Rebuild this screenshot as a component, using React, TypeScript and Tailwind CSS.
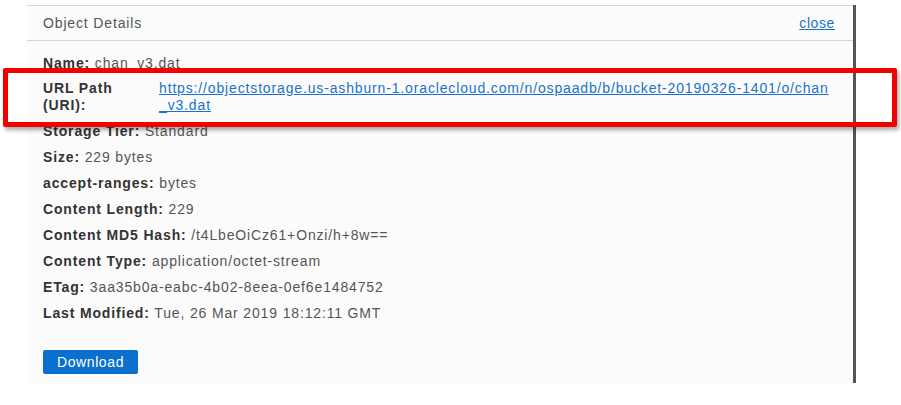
const rows: [string, string][] = [
  ['Storage Tier:', 'Standard'],
  ['Size:', '229 bytes'],
  ['accept-ranges:', 'bytes'],
  ['Content Length:', '229'],
  ['Content MD5 Hash:', '/t4LbeOiCz61+Onzi/h+8w=='],
  ['Content Type:', 'application/octet-stream'],
  ['ETag:', '3aa35b0a-eabc-4b02-8eea-0ef6e1484752'],
  ['Last Modified:', 'Tue, 26 Mar 2019 18:12:11 GMT'],
];

export default function App() {
  return (
    <div className="relative h-[405px] w-[901px] overflow-hidden bg-white font-['Liberation_Sans',Arial,sans-serif] text-[14px] tracking-[0.85px]">
      <div className="ml-[27px] mt-[5px] flex h-[378px] w-[829px]">
        <div className="flex-1 border-t border-[#d6d6d6] bg-[#fbfbfb]">
          <div className="flex h-[35px] items-center justify-between border-b border-[#d4d4d4] pl-[16px] pr-[18px]">
            <span className="text-[#555]">Object Details</span>
            <a href="#" className="tracking-[0.6px] text-[#1a73c9] underline">close</a>
          </div>
          <div className="pl-[16px] pt-[12px] text-[#555]">
            <p className="h-[20px] leading-[20px]"><b className="text-[#333]">Name:</b> chan_v3.dat</p>
            <div className="mt-[7px] flex leading-[17px]">
              <b className="w-[116px] shrink-0 pr-[20px] text-[#333]">URL Path (URI):</b>
              <a href="#" className="whitespace-nowrap text-[#1a73c9] underline">
                https://objectstorage.us-ashburn-1.oraclecloud.com/n/ospaadb/b/bucket-20190326-1401/o/chan
                <br />_v3.dat
              </a>
            </div>
            {rows.map(([k, v], i) => (
              <p key={k} className={`${i === 0 ? 'mt-[7px]' : 'mt-[6px]'} h-[20px] leading-[20px]`}><b className="text-[#333]">{k}</b> {v}</p>
            ))}
            <button className="mt-[27px] h-[24px] w-[95px] rounded-[2px] bg-[#0a70cf] tracking-[0.6px] text-white">Download</button>
          </div>
        </div>
        <div className="w-[3px] bg-[#555]" />
      </div>
      <div className="absolute left-[3px] top-[68px] h-[59px] w-[894px] rounded-[2px] border-[5px] border-[#f50000] shadow-[2px_3px_4px_rgba(0,0,0,0.35)]" />
    </div>
  );
}
